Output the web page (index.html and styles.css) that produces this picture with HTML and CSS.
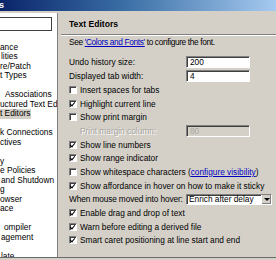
FILE: index.html
```html
<!DOCTYPE html>
<html lang="en">
<head>
    <meta charset="UTF-8">
    <title>Preferences - Text Editors</title>
    <link rel="stylesheet" href="styles.css">
</head>
<body>
    <div class="titlebar"><span>s</span></div>
    <div class="main">
        <div class="nav">
            <div class="filter"></div>
            <ul class="tree">
                <li></li>
                <li>ance</li>
                <li class="in1">lities</li>
                <li>re/Patch</li>
                <li>t Types</li>
                <li></li>
                <li class="in2">Associations</li>
                <li>uctured Text Ed</li>
                <li class="selected"><span>t Editors</span></li>
                <li></li>
                <li>k Connections</li>
                <li>ctives</li>
                <li></li>
                <li>y</li>
                <li>e Policies</li>
                <li class="in1">and Shutdown</li>
                <li>g</li>
                <li>owser</li>
                <li>ace</li>
                <li></li>
                <li class="in3">ompiler</li>
                <li class="in1">agement</li>
                <li></li>
                <li class="in1">late</li>
            </ul>
        </div>
        <div class="sash"></div>
        <div class="page">
            <div class="page-header">Text Editors</div>
            <div class="page-body">
                <p class="intro">See <a href="#">'Colors and Fonts'</a> to configure the font.</p>
                <div class="field tall">
                    <label>Undo history size:</label>
                    <div class="textbox">200</div>
                </div>
                <div class="field">
                    <label>Displayed tab width:</label>
                    <div class="textbox">4</div>
                </div>
                <div class="check"><span class="box"></span>Insert spaces for tabs</div>
                <div class="check"><span class="box on"></span>Highlight current line</div>
                <div class="check"><span class="box"></span>Show print margin</div>
                <div class="field row">
                    <label class="disabled">Print margin column:</label>
                    <div class="textbox disabled">80</div>
                </div>
                <div class="check"><span class="box on"></span>Show line numbers</div>
                <div class="check"><span class="box on"></span>Show range indicator</div>
                <div class="check"><span class="box"></span>Show whitespace characters (<a href="#">configure visibility</a>)</div>
                <div class="check"><span class="box on"></span>Show affordance in hover on how to make it sticky</div>
                <div class="field row">
                    <label class="tight">When mouse moved into hover:</label>
                    <div class="combo"><span>Enrich after delay</span><span class="drop"></span></div>
                </div>
                <div class="check"><span class="box on"></span>Enable drag and drop of text</div>
                <div class="check"><span class="box on"></span>Warn before editing a derived file</div>
                <div class="check"><span class="box on"></span>Smart caret positioning at line start and end</div>
                <p class="section">Appearance color options:</p>
            </div>
        </div>
    </div>
    <div class="bottom-line"></div>
</body>
</html>
```

FILE: styles.css
```css
body {
    margin: 0;
    width: 276px;
    height: 260px;
    overflow: hidden;
    background-color: #d4d0c8;
    font-family: "Liberation Sans", Arial, sans-serif;
    font-size: 8.3px;
    color: #000;
}
.titlebar {
    height: 11px;
    background: linear-gradient(to right, #0a246a, #3a6ea5 45%, #a6caf0);
    color: #fff;
    font-weight: bold;
    font-size: 9px;
    line-height: 10px;
}
.titlebar span {
    margin-left: -1px;
}
.main {
    display: flex;
    height: 246px;
    border-top: 2px solid #d4d0c8;
}
.nav {
    width: 57px;
    background-color: #fff;
    overflow: hidden;
    white-space: nowrap;
}
.filter {
    margin-top: 4px;
    width: 51px;
    height: 12px;
    border: 1px solid #404040;
    border-left: none;
}
.tree {
    list-style: none;
    margin: 2px 0 0;
    padding: 0;
}
.tree li {
    height: 9.51px;
    line-height: 9.51px;
}
.tree .in1 {
    padding-left: 1px;
}
.tree .in2 {
    padding-left: 5px;
}
.tree .in3 {
    padding-left: 4px;
}
.tree .selected span {
    display: inline-block;
    width: 31px;
    background-color: #d4d0c8;
}
.sash {
    width: 3px;
    border-left: 1px solid #808080;
    background-color: #d4d0c8;
}
.page {
    flex: 1;
    overflow: hidden;
    white-space: nowrap;
}
.page-header {
    height: 21px;
    line-height: 22px;
    padding-left: 8px;
    font-weight: bold;
    font-size: 8.6px;
    border-bottom: 1px solid #808080;
    box-shadow: 0 1px 0 #fff;
}
.page-body {
    padding-left: 8px;
}
.intro {
    margin: 1px 0 0;
    height: 12px;
    line-height: 12px;
    letter-spacing: -0.35px;
}
a {
    color: #0000c0;
}
.field {
    display: flex;
    align-items: center;
    height: 14px;
}
.field.tall {
    margin-top: 6px;
    height: 15px;
}
.field.row {
    height: 13.7px;
}
.field label {
    width: 117px;
}
.field label.tight {
    letter-spacing: -0.12px;
}
.field label.disabled {
    padding-left: 11px;
    width: 106px;
    color: #a8a6a0;
    text-shadow: 1px 1px 0 #fff;
}
.textbox {
    box-sizing: border-box;
    width: 64px;
    height: 12px;
    padding-left: 3px;
    line-height: 10px;
    background-color: #fff;
    border: 1px solid;
    border-color: #808080 #fff #fff #808080;
    box-shadow: inset 1px 1px 0 #404040;
}
.textbox.disabled {
    background-color: #d4d0c8;
    color: #a8a6a0;
}
.combo {
    box-sizing: border-box;
    display: flex;
    justify-content: space-between;
    width: 86px;
    height: 11px;
    padding-left: 2px;
    line-height: 9px;
    background-color: #fff;
    border: 1px solid;
    border-color: #808080 #fff #fff #808080;
    box-shadow: inset 1px 1px 0 #404040;
}
.combo .drop {
    position: relative;
    width: 9px;
    background-color: #d4d0c8;
    border-left: 1px solid #fff;
    box-shadow: inset -1px -1px 0 #808080;
}
.combo .drop::after {
    content: "";
    position: absolute;
    left: 2px;
    top: 3px;
    border: 3px solid transparent;
    border-top: 3px solid #000;
    border-bottom: none;
}
.check {
    display: flex;
    align-items: center;
    height: 13.7px;
}
.box {
    box-sizing: border-box;
    position: relative;
    width: 8px;
    height: 8px;
    margin-right: 3px;
    background-color: #fff;
    border: 1px solid;
    border-color: #808080 #fff #fff #808080;
    box-shadow: inset 1px 1px 0 #404040;
}
.box.on::after {
    content: "";
    position: absolute;
    left: 1px;
    top: 0px;
    width: 2px;
    height: 4px;
    border: solid #000;
    border-width: 0 1.5px 1.5px 0;
    transform: rotate(40deg);
}
.section {
    margin: 13px 0 0;
    line-height: 10px;
}
.bottom-line {
    position: absolute;
    left: 0;
    top: 257px;
    width: 276px;
    height: 3px;
    border-top: 1px solid #6b6b6b;
    background-color: #d4d0c8;
}
```
